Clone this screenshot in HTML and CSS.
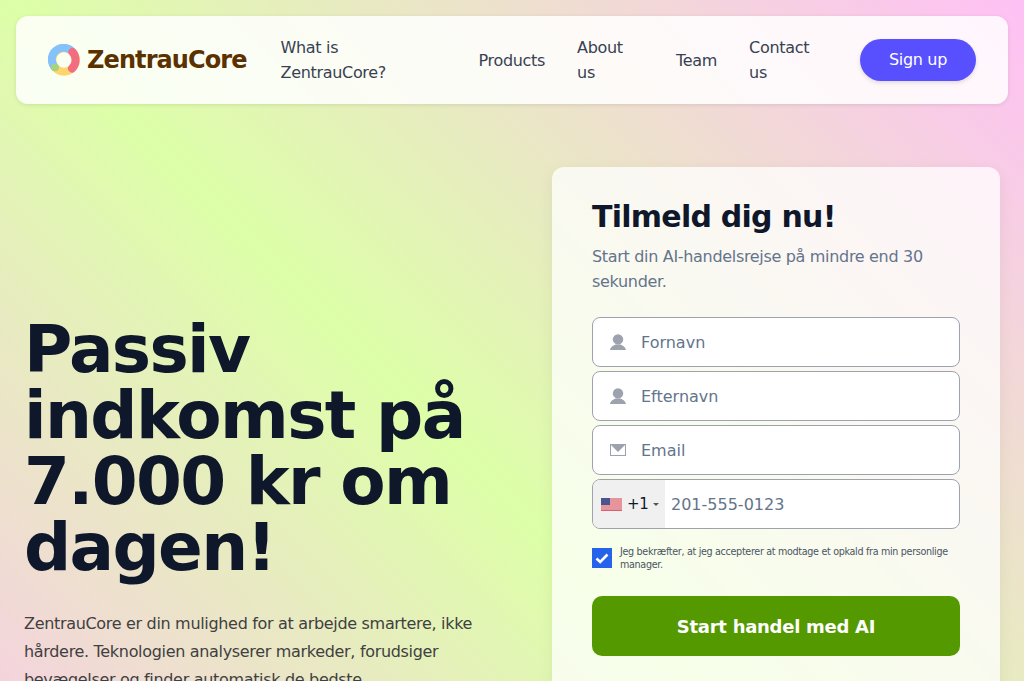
FILE: index.html
```html
<!DOCTYPE html>
<html lang="en">
<head>
   <meta charset="UTF-8">
   <meta name="viewport" content="width=device-width, initial-scale=1.0">
   <title>ZentrauCore</title>
   <link rel="stylesheet" href="styles.css">
</head>
<body>

<div class="page">
   <nav class="navbar">
       <a class="brand" href="#">
           <svg class="logo" viewBox="0 0 32 32" fill="none" stroke-width="8">
               <circle cx="16" cy="16" r="11.7" stroke="#fdd56a"/>
               <path d="M6.5 23 A11.7 11.7 0 0 1 24.5 8" stroke="#85c1fb" stroke-linecap="round"/>
               <path d="M24.5 8 A11.7 11.7 0 0 1 24 24.5" stroke="#f26d80" stroke-linecap="round"/>
               <circle cx="7" cy="23.5" r="3.8" fill="#a5d57a"/>
           </svg>
           <span>ZentrauCore</span>
       </a>
       <ul class="nav-links">
           <li class="link-what"><a href="#">What is ZentrauCore?</a></li>
           <li><a href="#">Products</a></li>
           <li class="link-about"><a href="#">About us</a></li>
           <li><a href="#">Team</a></li>
           <li class="link-contact"><a href="#">Contact us</a></li>
       </ul>
       <a class="signup-btn" href="#">Sign up</a>
   </nav>

   <main class="hero">
       <section class="hero-text">
           <h1>Passiv indkomst på 7.000 kr om dagen!</h1>
           <p>ZentrauCore er din mulighed for at arbejde smartere, ikke hårdere. Teknologien analyserer markeder, forudsiger bevægelser og finder automatisk de bedste handelsmuligheder for dig.</p>
       </section>

       <section class="card">
           <h2>Tilmeld dig nu!</h2>
           <p class="card-sub">Start din AI-handelsrejse på mindre end 30 sekunder.</p>
           <form class="signup-form">
               <label class="field">
                   <svg class="field-icon" viewBox="0 0 16 16" fill="#9ca3af"><circle cx="8" cy="5.4" r="5.2"/><path d="M0 16 C0.6 12.6 3 11.6 5.5 10.4 H10.5 C13 11.6 15.4 12.6 16 16 Z"/></svg>
                   <input type="text" placeholder="Fornavn">
               </label>
               <label class="field">
                   <svg class="field-icon" viewBox="0 0 16 16" fill="#9ca3af"><circle cx="8" cy="5.4" r="5.2"/><path d="M0 16 C0.6 12.6 3 11.6 5.5 10.4 H10.5 C13 11.6 15.4 12.6 16 16 Z"/></svg>
                   <input type="text" placeholder="Efternavn">
               </label>
               <label class="field">
                   <svg class="field-icon" viewBox="0 0 16 12"><rect x="0.5" y="0.5" width="15" height="11" fill="#fff" stroke="#9ca3af"/><path d="M0 0 H16 L8 8 Z" fill="#9ca3af"/></svg>
                   <input type="email" placeholder="Email">
               </label>
               <div class="field field-phone">
                   <div class="dial">
                       <svg class="flag" viewBox="0 0 21 13">
                           <rect width="21" height="13" fill="#f3c9cc"/>
                           <path d="M0 1 H21 M0 3 H21 M0 5 H21 M0 7 H21 M0 9 H21 M0 11 H21 M0 12.5 H21" stroke="#d9616d" stroke-width="1"/>
                           <rect width="9" height="7" fill="#4a5590"/>
                       </svg>
                       <span>+1</span>
                       <i class="caret"></i>
                   </div>
                   <input type="tel" placeholder="201-555-0123">
               </div>
               <label class="consent">
                   <span class="checkbox">
                       <svg viewBox="0 0 20 20" fill="none" stroke="#fff" stroke-width="2.6"><path d="M4.5 10.5 L8.2 14 L15.5 6.5"/></svg>
                   </span>
                   <span>Jeg bekræfter, at jeg accepterer at modtage et opkald fra min personlige manager.</span>
               </label>
               <button type="button" class="submit-btn">Start handel med AI</button>
           </form>
       </section>
   </main>
</div>

</body>
</html>
```

FILE: styles.css
```css
* {
    box-sizing: border-box;
}
html, body {
    margin: 0;
    height: 681px;
    overflow: hidden;
}
body {
    font-family: "DejaVu Sans", sans-serif;
    color: #0f172a;
    letter-spacing: -0.32px;
}
a {
    text-decoration: none;
    color: inherit;
}
.page {
    height: 1000px;
    padding: 16px 16px 0;
    background: linear-gradient(45deg, #ffc0f5 0%, #ddffa8 50%, #ffc0f5 100%);
}
.navbar {
    display: flex;
    align-items: center;
    justify-content: space-between;
    height: 88px;
    padding: 0 32px;
    border-radius: 12px;
    background: rgba(255, 255, 255, 0.85);
    box-shadow: 0 1px 4px rgba(0, 0, 0, 0.1);
}
.brand {
    display: flex;
    align-items: center;
    gap: 7px;
    font-size: 24px;
    font-weight: 700;
    letter-spacing: -0.9px;
    color: #5c3100;
}
.logo {
    width: 32px;
    height: 32px;
}
.nav-links {
    display: flex;
    gap: 32px;
    align-items: center;
    list-style: none;
    margin: 0;
    padding: 0;
    font-size: 16px;
    line-height: 25px;
    color: #374151;
}
.link-what {
    width: 166px;
}
.link-about {
    width: 67px;
}
.link-contact {
    width: 77px;
}
.signup-btn {
    padding: 0 29px;
    height: 42px;
    line-height: 42px;
    border-radius: 21px;
    font-size: 16px;
    color: #fff;
    background: #5850ff;
    box-shadow: 0 2px 4px rgba(0, 0, 0, 0.12);
}
.hero {
    display: flex;
    justify-content: space-between;
    margin: 63px 8px 0;
    gap: 64px;
}
.hero-text {
    width: 464px;
    padding-top: 150px;
}
h1 {
    margin: 0;
    font-size: 66px;
    line-height: 66px;
    font-weight: 700;
    letter-spacing: -1.65px;
}
.hero-text p {
    margin: 29px 0 0;
    font-size: 16px;
    line-height: 28px;
    color: #404040;
}
.card {
    flex: none;
    width: 448px;
    padding: 32px 40px;
    border-radius: 12px;
    background: rgba(255, 255, 255, 0.75);
    box-shadow: 0 4px 16px rgba(0, 0, 0, 0.06);
}
.card h2 {
    margin: 0;
    font-size: 30px;
    line-height: 36px;
    font-weight: 700;
    letter-spacing: -0.75px;
}
.card-sub {
    margin: 9px 0 23px;
    font-size: 16px;
    line-height: 25px;
    color: #64748b;
}
.signup-form {
    display: flex;
    flex-direction: column;
    gap: 4px;
}
.field {
    display: flex;
    align-items: center;
    height: 50px;
    padding-left: 17px;
    border: 1px solid #9ca3af;
    border-radius: 8px;
    background: #fff;
    overflow: hidden;
}
.field-icon {
    flex: none;
    width: 16px;
}
.field input {
    flex: 1;
    min-width: 0;
    margin-left: 15px;
    padding: 0;
    border: none;
    outline: none;
    background: transparent;
    font-family: inherit;
    font-size: 16px;
    color: #0f172a;
}
.field input::placeholder {
    color: #64748b;
    opacity: 1;
}
.field-phone {
    padding-left: 0;
}
.dial {
    flex: none;
    display: flex;
    align-items: center;
    width: 72px;
    height: 100%;
    padding-left: 8px;
    background: #f0f0f0;
    font-size: 15px;
}
.flag {
    width: 21px;
    height: 13px;
    margin-right: 5px;
}
.caret {
    margin-left: 5px;
    border: 3px solid transparent;
    border-top: 3px solid #555;
    border-bottom: none;
}
.field-phone input {
    margin-left: 6px;
}
.consent {
    display: flex;
    align-items: center;
    gap: 8px;
    margin: 12px 0 21px;
    font-size: 9.6px;
    line-height: 13px;
    color: #4b5563;
}
.checkbox {
    flex: none;
    width: 20px;
    height: 20px;
    background: #2563eb;
}
.checkbox svg {
    display: block;
}
.submit-btn {
    height: 60px;
    border: none;
    border-radius: 10px;
    background: #559900;
    color: #fff;
    font-family: inherit;
    font-size: 18px;
    font-weight: 700;
    letter-spacing: -0.27px;
    cursor: pointer;
}
```
